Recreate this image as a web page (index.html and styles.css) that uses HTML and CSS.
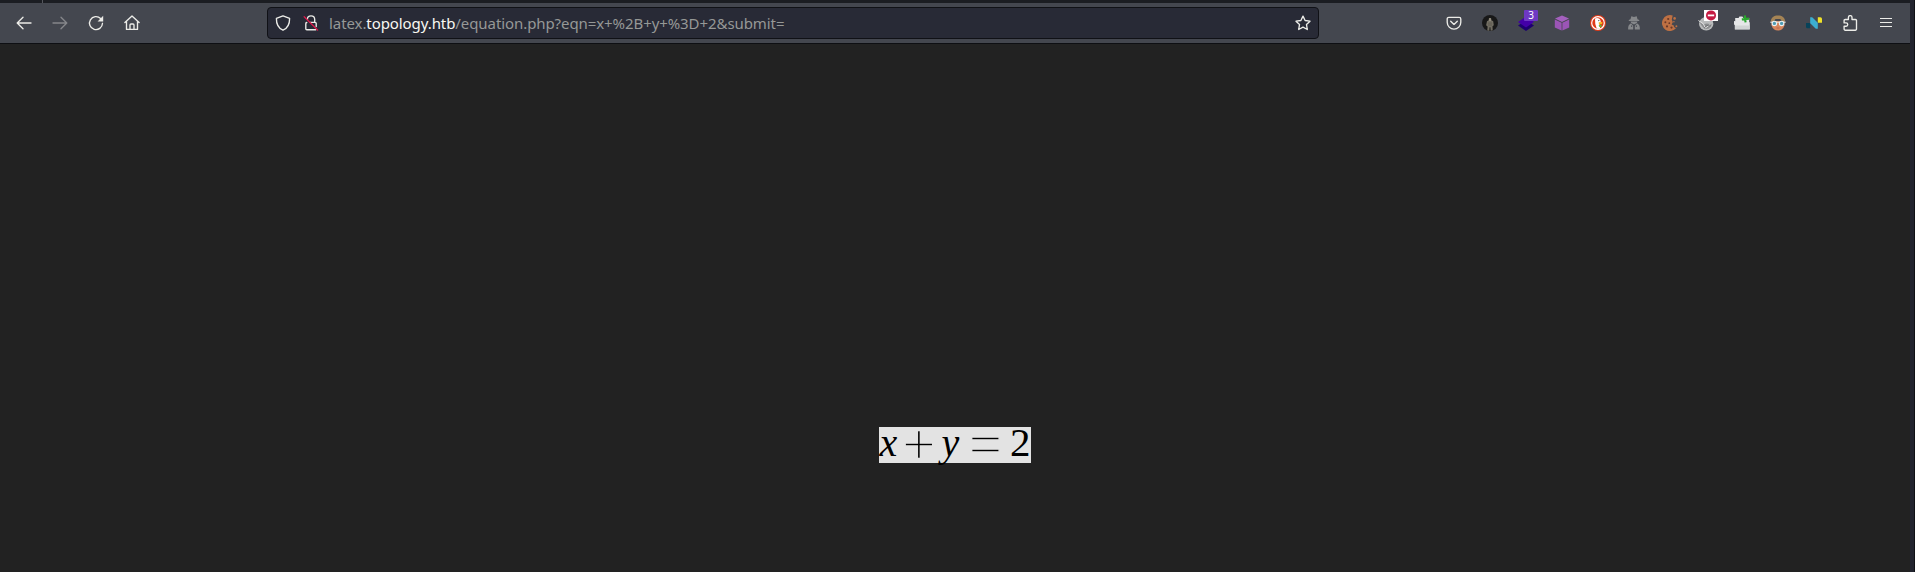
FILE: index.html
```
<!DOCTYPE html>
<html lang="en">
<head>
<meta charset="utf-8">
<title>latex.topology.htb</title>
<link rel="stylesheet" href="styles.css">
</head>
<body>
<div class="window">
  <div class="tabstrip"><i class="tab-separator"></i></div>
  <header class="toolbar">
    <nav class="nav">
      <svg class="icon" viewBox="0 0 16 16"><path d="M15 8H1.5M7 2.2 1.2 8 7 13.8"/></svg>
      <svg class="icon disabled" viewBox="0 0 16 16"><path d="M1 8h13.5M9 2.2 14.8 8 9 13.8"/></svg>
      <svg class="icon" viewBox="0 0 16 16"><path d="M12.6 3.5A6.5 6.5 0 1 0 14.5 8.3"/><path class="fill" d="M15.2.8v5.6H9.6z"/></svg>
      <svg class="icon" viewBox="0 0 16 16"><path d="M.9 7.6 8 .9l7.1 6.7M2.5 6.6v7.8h11V6.6M6 14.3V10a1 1 0 0 1 1-1h2a1 1 0 0 1 1 1v4.3"/></svg>
    </nav>
    <div class="urlbar">
      <svg class="icon shield" viewBox="0 0 16 16"><path d="M8 .9 14.6 3.4C14.7 8.8 12.8 13 8 15.2 3.2 13 1.3 8.8 1.4 3.4z"/></svg>
      <svg class="icon lock" viewBox="0 0 16 16"><path d="M4.4 4.4C4.4 2.2 5.8.9 8 .9s3.7 1.5 3.7 3.7V7.4M7 7.3h5a1.2 1.2 0 0 1 1.2 1.2v3M3.8 7.5a1.2 1.2 0 0 0-1 1.2v5a1 1 0 0 0 1 1h9"/><path class="slash" d="M1.2 1.8 14.6 15"/></svg>
      <div class="url">latex.<b>topology.htb</b>/equation.php?eqn=x+%2B+y+%3D+2&amp;submit=</div>
      <svg class="icon star" viewBox="0 0 16 16"><path d="m8 1.1 2.1 4.4 4.9.7-3.5 3.4.8 4.9L8 12.2l-4.3 2.3.8-4.9L1 6.2l4.9-.7z"/></svg>
    </div>
    <div class="extensions">
      <svg class="icon" viewBox="0 0 16 16"><path d="M2.8 2.3h10.4a1.6 1.6 0 0 1 1.6 1.6v3.4a6.8 6.8 0 0 1-13.6 0V3.9a1.6 1.6 0 0 1 1.6-1.6zM4.7 6.2 8 9.4l3.3-3.2"/></svg>
      <svg class="art" viewBox="0 0 16 16"><circle cx="8" cy="8" r="8" fill="#181818"/><path d="M7 3h2l.5 2.2 1.7 1.1.6 4-1.3 1 .2 4-2 .5-.3-3.6-.8.1-.3 3.5-2-.4.3-3.9-1.5-1.2.9-4 1.6-1z" fill="#716d62"/><path d="M7 3.3h2v2l-1 1-1-1z" fill="#918b7d"/><path d="M6 8.1h4M6 10h4" stroke="#4a473f" stroke-width=".5"/></svg>
      <div class="badged">
        <svg class="art" viewBox="0 0 16 16"><path d="m8 5.2 8 5.4L8 16 0 10.6z" fill="#1d0070"/><path d="m8 1.4 8 5.5-8 5.6-8-5.6z" fill="#4300a8"/></svg>
        <span class="badge">3</span>
      </div>
      <svg class="art" viewBox="0 0 16 16"><path d="m8 .4 7 3.2-7 3.3-7-3.3z" fill="#a460be"/><path d="m.8 4.5 6.8 3.2v7.9L.8 12.4z" fill="#9b55b6"/><path d="m15.2 4.5-6.8 3.2v7.9l6.8-3.2z" fill="#9b55b6"/></svg>
      <svg class="art" viewBox="0 0 16 16"><circle cx="8" cy="8" r="8" fill="#e13a17"/><circle cx="8" cy="8" r="6.3" fill="#e13a17" stroke="#fff" stroke-width="1.2"/><path d="M5 3.4c2.2-1.2 5.4-.3 5.6 2.6l.3 2.1L9.4 9l.8 4.7-3.4.1L5.3 9z" fill="#fff"/><path d="m8.7 7.3 3.8-.2-.5 1.8-3.1.4z" fill="#f8b51c"/><path d="m8.7 10.3 2.8-.8.1 2.8-2.5-.6z" fill="#5fb53d"/><circle cx="8.8" cy="5.6" r=".6" fill="#333"/></svg>
      <svg class="art" viewBox="0 0 16 16"><g fill="#85878a"><path d="m5.3 1.2 2.7.7 2.7-.7.8 3.1 1.7.8v1H2.8v-1l1.7-.8z"/><path d="M4.5 6.6h7L10.8 8 8 9.4 5.2 8z"/><path d="m5 8.2 2.2 2.5v3.8H2.1c0-2.8.3-5 2.9-6.3zM11 8.2l-2.2 2.5v3.8h5.1c0-2.8-.3-5-2.9-6.3z"/></g><path d="M5 10.6h1.2v1.2H5zM9.8 10.6H11v1.2H9.8z" fill="#44464f"/></svg>
      <svg class="art" viewBox="0 0 16 16"><path d="M10.7.5A8 8 0 1 0 14 13.3l-2-1.3-.2-1.6-2.2-.8 1.2-2.3-1-2.7z" fill="#bd7043"/><circle cx="12.6" cy="3.4" r="1.3" fill="#bd7043"/><circle cx="11.9" cy="6.7" r=".8" fill="#bd7043"/><circle cx="14.4" cy="11.2" r="1" fill="#bd7043"/><g fill="#6b3828"><circle cx="6.2" cy="4" r="1.1"/><circle cx="3.4" cy="7.2" r="1"/><circle cx="7.3" cy="8.2" r=".9"/><circle cx="5" cy="11.4" r="1.1"/><circle cx="9.5" cy="12.6" r="1.1"/></g></svg>
      <div class="badged">
        <svg class="art" viewBox="0 0 16 16"><ellipse cx="8.2" cy="8.7" rx="7.2" ry="6.8" fill="#b9bbbc"/><path d="M.3 5.3 5 9.3l4-.7 5 1-3 4-4 .7-3-3z" fill="#8b8d8f"/><path d="M.5 5.5 5.5 9l1.8 4 5-3.5" fill="none" stroke="#e4e4e4"/><path d="m6 13 3-2.5 4 .5" fill="none" stroke="#696c6f" stroke-width=".8"/></svg>
        <span class="blocked"><svg viewBox="0 0 14 12"><circle cx="7" cy="5.4" r="5" fill="#c51b43"/><path d="M3.8 5.4h6.4" stroke="#fff" stroke-width="1.8"/></svg></span>
      </div>
      <svg class="art" viewBox="0 0 16 16"><path d="M1.2 3h3.4l.8-1.6h3L9.4 3h5.8v4.2h.6v7.3H.8v-4.4L0 9.5V6l1.2.2z" fill="#e6e7e8"/><path d="M1 10.5h14.5v3.7H1z" fill="#d2d4d5"/><path d="M11.2.4v7M7.8 4h7.4" stroke="#29a62c" stroke-width="2.1" transform="rotate(-6 11.2 4)"/></svg>
      <svg class="art" viewBox="0 0 16 16"><path d="M1.5 6h13v4.2c-1 3.3-3.3 5.3-6.5 5.3s-5.5-2-6.5-5.3z" fill="#d7865d"/><path d="M.8 6.4C1.2 2.4 4 .6 8 .6s6.8 2 7.2 5.8L12 5.9 10.2 4H5.5L4 5.9z" fill="#a58455"/><path d="M.3 7.2h15.4" stroke="#e7eff1"/><circle cx="4.4" cy="8.4" r="2.2" fill="#4f9bb3" stroke="#e7eff1" stroke-width="1.1"/><circle cx="11.6" cy="8.4" r="2.2" fill="#4f9bb3" stroke="#e7eff1" stroke-width="1.1"/><path d="M6.5 13h3" stroke="#b15c48" stroke-width=".8"/></svg>
      <svg class="art" viewBox="0 0 16 16"><path d="M0 8h4.2v5.2H1.5A1.5 1.5 0 0 1 0 11.7z" fill="#07435a"/><path d="M11.8 2.3h2.6A1.6 1.6 0 0 1 16 3.9v3.8h-4.2z" fill="#f0e229"/><path d="M4.2 2.3h2l5.6 5.5v5.9H9.8L4.2 8.2z" fill="#3caed0"/></svg>
      <svg class="icon puzzle" viewBox="0 0 16 16"><path d="M3.2 15.2h10.2a1.1 1.1 0 0 0 1.1-1.1V5.6a1.1 1.1 0 0 0-1.1-1.1H10V2.4a1.8 1.8 0 0 0-3.6 0v2.1H3.2A1.1 1.1 0 0 0 2.1 5.6v2.3h2a1.6 1.6 0 0 1 0 3.3h-2v2.9a1.1 1.1 0 0 0 1.1 1.1z"/></svg>
      <svg class="icon menu" viewBox="0 0 16 16"><path d="M2 3.5h12M2 7.5h12M2 11.5h12"/></svg>
    </div>
  </header>
  <main class="page">
    <svg class="equation" viewBox="0 0 152 36">
      <text class="op" x="40" y="37">+</text>
      <text class="op" x="106.5" y="37">=</text>
      <text class="var" x="0.5" y="28.5">x</text>
      <text class="var" x="62.5" y="28.5">y</text>
      <text x="131" y="28.5">2</text>
    </svg>
  </main>
</div>
</body>
</html>
```
FILE: styles.css
```
* { box-sizing: border-box; }
html, body { height: 100%; }
body {
  margin: 0;
  overflow: hidden;
  background: #22242f;
  border-right: 1px solid #101116;
  font-family: "Noto Sans", sans-serif;
}
.window {
  display: flex;
  flex-direction: column;
  width: 1910px;
  height: 572px;
  background: #222;
}
.tabstrip {
  height: 3px;
  flex: none;
  background: #1b1d22;
  padding-left: 42px;
}
.tab-separator {
  display: block;
  width: 1px;
  height: 3px;
  background: #55575d;
}
.toolbar {
  display: flex;
  flex: none;
  align-items: center;
  height: 41px;
  padding: 0 16px;
  background: #44474f;
  border-bottom: 1px solid #0e0f13;
}
.nav, .extensions { display: flex; align-items: center; gap: 20px; }
.nav { width: 251px; }
.extensions { margin-left: auto; }
.icon {
  display: block;
  flex: none;
  width: 16px;
  height: 16px;
  fill: none;
  stroke: #ecece8;
  stroke-width: 1.35;
  stroke-linecap: round;
  stroke-linejoin: round;
}
.disabled { stroke: #85868a; }
.fill { fill: #ecece8; stroke: none; }
.menu { stroke-width: 1.2; stroke-linecap: butt; }
.art { display: block; flex: none; width: 16px; height: 16px; }
.urlbar {
  display: flex;
  align-items: center;
  width: 1052px;
  height: 32px;
  padding: 0 7px;
  background: #282a36;
  border: 1px solid #101116;
  border-radius: 4px;
}
.lock { margin-left: 12px; }
.slash { stroke: #d8194a; }
.url {
  flex: 1;
  margin-left: 10px;
  font-size: 15px;
  line-height: 20px;
  letter-spacing: -0.08px;
  white-space: pre;
  color: #969896;
}
.url b { font-weight: 400; color: #f8f8f2; }
.badged { position: relative; width: 16px; height: 16px; }
.badge {
  position: absolute;
  left: 6px;
  top: -5px;
  width: 14px;
  height: 11px;
  border-radius: 1px;
  background: #6e38c4;
  color: #fff;
  font-size: 10px;
  line-height: 11px;
  text-align: center;
}
.blocked {
  position: absolute;
  left: 6px;
  top: -5px;
  width: 14px;
  height: 11px;
  background: #fff;
}
.blocked svg { display: block; width: 14px; height: 12px; }
.page {
  display: flex;
  flex: 1;
  justify-content: center;
  align-items: flex-start;
  padding-top: 383px;
}
.equation {
  display: block;
  width: 152px;
  height: 36px;
  overflow: visible;
  background: #e3e3e3;
  fill: #000;
  font-family: "Liberation Serif", serif;
  font-size: 41px;
}
.var { font-style: italic; font-size: 40px; }
.op {
  font-size: 59px;
  text-anchor: middle;
  stroke: #e3e3e3;
  stroke-width: 1.3px;
  clip-path: inset(0);
}
```
